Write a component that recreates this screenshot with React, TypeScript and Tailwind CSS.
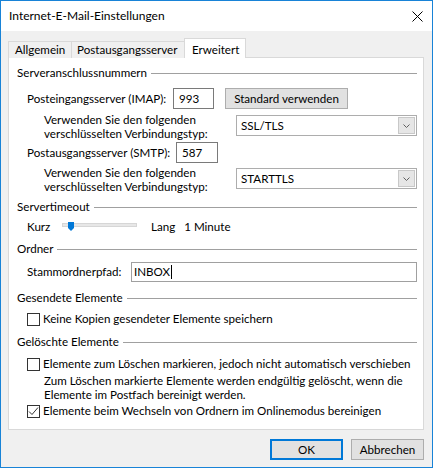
import type { ReactNode } from "react";

const font = { fontFamily: 'Lato, "Noto Sans", sans-serif' };

function GroupHeading({ title, className = "" }: { title: string; className?: string }) {
  return (
    <div className={`flex h-[14px] items-center gap-[4px] ${className}`}>
      <span className="whitespace-nowrap leading-[14px]">{title}</span>
      <div className="h-px flex-1 bg-[#a0a0a0]" />
    </div>
  );
}

function TextBox({ value, className = "", caret = false }: { value: string; className?: string; caret?: boolean }) {
  return (
    <div className={`flex shrink-0 items-center border border-[#7a7a7a] bg-white ${className}`}>
      <span className="leading-[14px]">{value}</span>
      {caret ? <span className="ml-px h-[14px] w-px bg-black" /> : null}
    </div>
  );
}

function Combo({ value, className = "" }: { value: string; className?: string }) {
  return (
    <div className={`flex h-[21px] w-[181px] shrink-0 items-center border border-[#adadad] bg-white pl-[4px] ${className}`}>
      <span className="flex-1 leading-[14px]">{value}</span>
      <div className="mr-px flex h-[17px] w-[17px] items-center justify-center border border-[#c8c8c8] bg-[#e6e6e6]">
        <svg width="7" height="4" viewBox="0 0 7 4">
          <path d="M0.5 0.5 L3.5 3.5 L6.5 0.5" fill="none" stroke="#606060" strokeWidth="1" />
        </svg>
      </div>
    </div>
  );
}

function CheckBox({ checked = false, label }: { checked?: boolean; label: ReactNode }) {
  return (
    <div className="flex h-[14px] items-center pl-[10px]">
      <div className="flex h-[13px] w-[13px] shrink-0 items-center justify-center border border-[#333333] bg-white">
        {checked ? (
          <svg width="11" height="11" viewBox="0 0 11 11">
            <path d="M1 5.5 L4 8.5 L10 1.5" fill="none" stroke="#333333" strokeWidth="1" />
          </svg>
        ) : null}
      </div>
      <span className="ml-[3px] whitespace-nowrap leading-[14px]">{label}</span>
    </div>
  );
}

function Slider() {
  return (
    <div className="relative h-[10px] w-[75px] shrink-0">
      <div className="absolute left-0 right-0 top-[1px] h-[4px] border border-[#d6d6d6] bg-[#e7e7e7]" />
      <svg className="absolute left-[6px] top-0" width="6" height="9" viewBox="0 0 6 9">
        <path d="M0 0 H6 V6 L3 9 L0 6 Z" fill="#0078d7" />
      </svg>
    </div>
  );
}

function EncryptionRow({ value, className = "" }: { value: string; className?: string }) {
  return (
    <div className={`flex items-start pl-[27px] ${className}`}>
      <div className="flex-1 whitespace-nowrap leading-[14px]">
        <div>Verwenden Sie den folgenden</div>
        <div>verschlüsselten Verbindungstyp:</div>
      </div>
      <Combo value={value} className="mt-[2px]" />
    </div>
  );
}

export default function App() {
  return (
    <div
      className="flex h-[468px] w-[433px] flex-col border border-[#1883d7] bg-[#f0f0f0] text-[11.6px] text-black"
      style={font}
    >
      {/* title bar */}
      <div className="flex h-[30px] items-center bg-white pl-[8px] pr-[9px]">
        <span className="flex-1 text-[12px] leading-[14px]">Internet-E-Mail-Einstellungen</span>
        <svg width="11" height="11" viewBox="0 0 11 11">
          <path d="M0.5 0.5 L10.5 10.5 M10.5 0.5 L0.5 10.5" stroke="#000" strokeWidth="1" />
        </svg>
      </div>

      <div className="flex flex-1 flex-col px-[7px] pt-[7px]">
        {/* tabs */}
        <div className="relative z-10 -mb-px flex h-[20px] items-end whitespace-nowrap">
          <div className="flex h-[17px] w-[64px] items-center border border-b-0 border-[#d9d9d9] bg-[#f0f0f0] pl-[6px]">
            Allgemein
          </div>
          <div className="-ml-px flex h-[17px] w-[114px] items-center border border-b-0 border-[#d9d9d9] bg-[#f0f0f0] pl-[5px]">
            Postausgangsserver
          </div>
          <div className="-ml-px flex h-[20px] w-[62px] items-start border border-b-0 border-[#d9d9d9] bg-white pl-[7px] pt-[2px]">
            Erweitert
          </div>
        </div>

        {/* panel */}
        <div className="flex h-[373px] w-[416px] flex-col border border-[#d9d9d9] bg-white pl-[8px] pr-[6px] pt-[8px]">
          <GroupHeading title="Serveranschlussnummern" />

          <div className="mt-[8px] flex h-[21px] items-center pl-[10px]">
            <span className="w-[146px] shrink-0 whitespace-nowrap leading-[14px]">Posteingangsserver (IMAP):</span>
            <TextBox value="993" className="h-[21px] w-[41px] pl-[5px]" />
            <div className="ml-[11px] flex h-[21px] w-[123px] items-center justify-center whitespace-nowrap border border-[#adadad] bg-[#e1e1e1]">
              Standard verwenden
            </div>
          </div>

          <EncryptionRow value="SSL/TLS" className="mt-[4px]" />

          <div className="mt-px flex h-[21px] items-center pl-[10px]">
            <span className="w-[149px] shrink-0 whitespace-nowrap leading-[14px]">Postausgangsserver (SMTP):</span>
            <TextBox value="587" className="h-[21px] w-[42px] pl-[5px]" />
          </div>

          <EncryptionRow value="STARTTLS" className="mt-[3px]" />

          <GroupHeading title="Servertimeout" className="mt-[6px]" />

          <div className="mt-[6px] flex h-[14px] items-center whitespace-nowrap pl-[10px]">
            <span className="w-[35px] shrink-0 leading-[14px]">Kurz</span>
            <Slider />
            <span className="ml-[14px] leading-[14px]">Lang</span>
            <span className="ml-[9px] leading-[14px]">1 Minute</span>
          </div>

          <GroupHeading title="Ordner" className="mt-[8px]" />

          <div className="mt-[6px] flex h-[20px] items-center pl-[10px]">
            <span className="w-[104px] shrink-0 whitespace-nowrap leading-[14px]">Stammordnerpfad:</span>
            <TextBox value="INBOX" caret className="h-[20px] flex-1 border-[#a0a0a0] pl-[2px]" />
          </div>

          <GroupHeading title="Gesendete Elemente" className="mt-[9px]" />

          <div className="mt-[7px]">
            <CheckBox label="Keine Kopien gesendeter Elemente speichern" />
          </div>

          <GroupHeading title="Gelöschte Elemente" className="mt-[9px]" />

          <div className="mt-[8px]">
            <CheckBox label="Elemente zum Löschen markieren, jedoch nicht automatisch verschieben" />
          </div>

          <div className="mt-[3px] whitespace-nowrap pl-[27px] leading-[14px]">
            <div>Zum Löschen markierte Elemente werden endgültig gelöscht, wenn die</div>
            <div>Elemente im Postfach bereinigt werden.</div>
          </div>

          <div className="mt-[2px]">
            <CheckBox checked label="Elemente beim Wechseln von Ordnern im Onlinemodus bereinigen" />
          </div>
        </div>

        {/* buttons */}
        <div className="mt-[9px] flex justify-end gap-[8px] pr-px">
          <div className="flex h-[21px] w-[73px] items-center justify-center border-2 border-[#0078d7] bg-[#e1e1e1]">
            OK
          </div>
          <div className="flex h-[21px] w-[73px] items-center justify-center border border-[#adadad] bg-[#e1e1e1]">
            Abbrechen
          </div>
        </div>
      </div>
    </div>
  );
}
